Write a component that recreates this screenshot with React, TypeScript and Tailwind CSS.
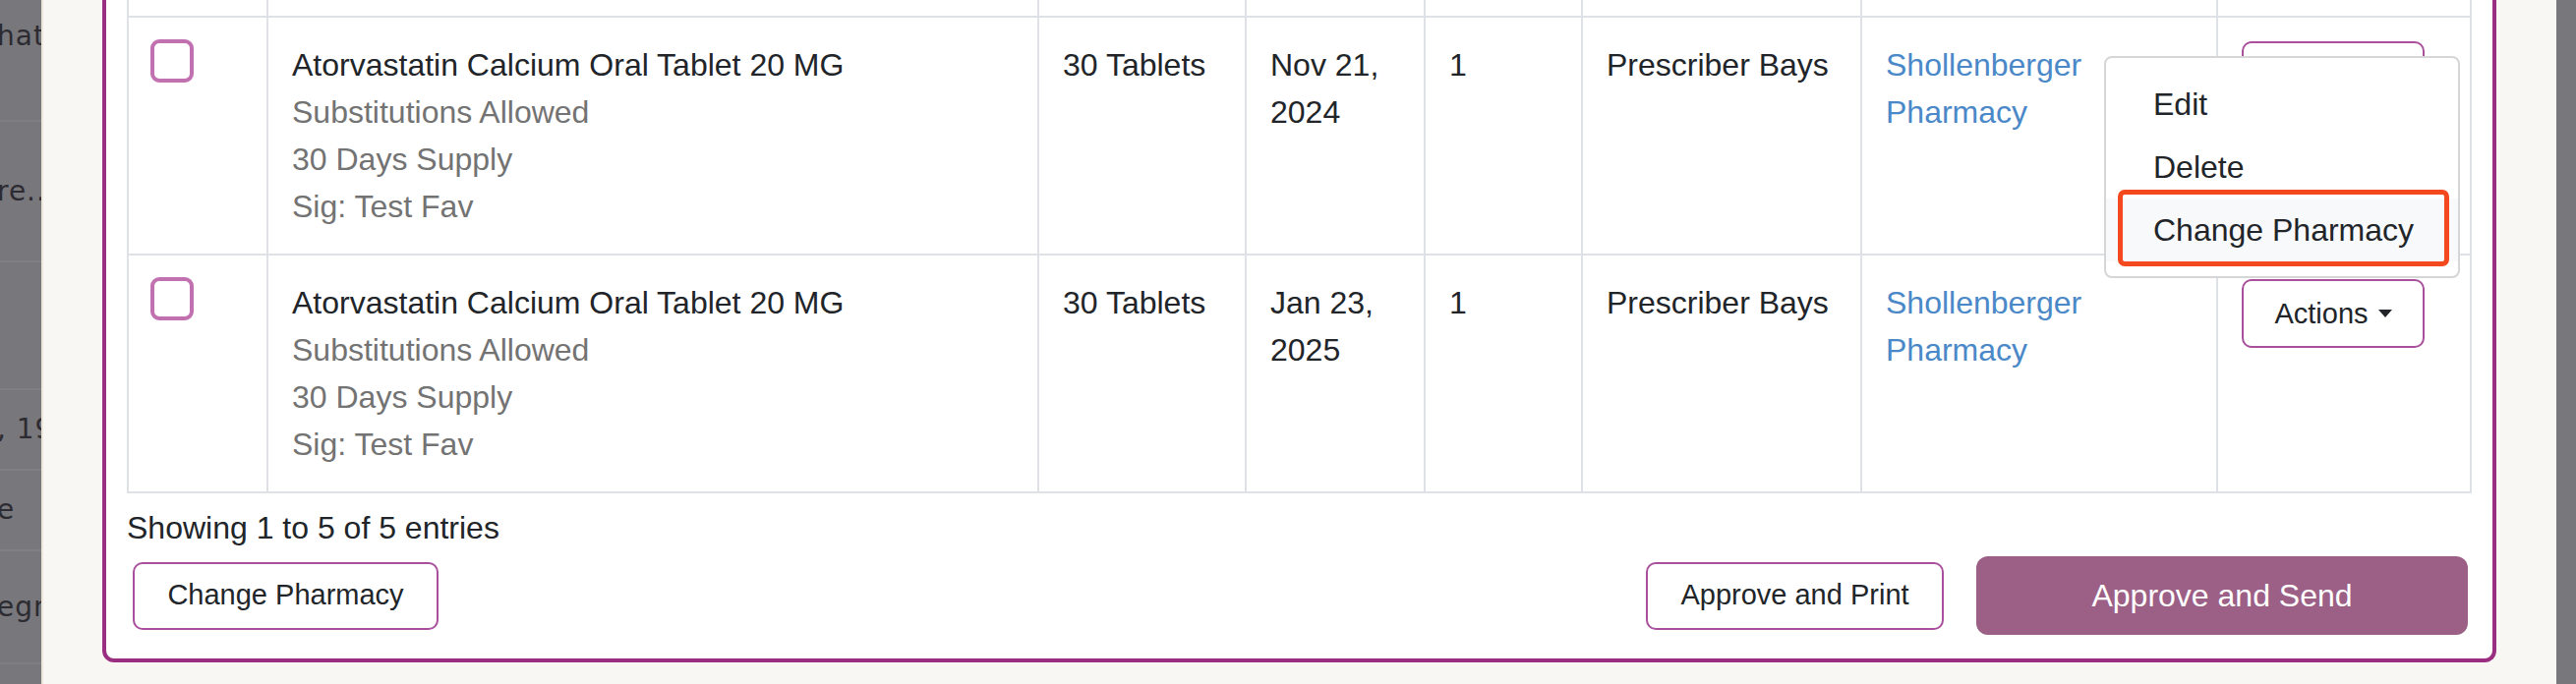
import React from "react";

const COLS = "grid grid-cols-[142px_784px_211px_182px_160px_284px_362px_258px]";

function Caret() {
  return (
    <span className="ml-[10px] inline-block h-0 w-0 border-x-[7px] border-t-[8px] border-x-transparent border-t-[#212529]" />
  );
}

function ActionsButton() {
  return (
    <button className="flex h-[70px] w-[186px] items-center justify-center rounded-[10px] border-2 border-[#a8509b] bg-white text-[29px] text-[#212529]">
      Actions
      <Caret />
    </button>
  );
}

function Cell({ children, className = "" }: { children?: React.ReactNode; className?: string }) {
  return <div className={`border-b-2 border-l-2 border-[#dee2e6] p-[24px] ${className}`}>{children}</div>;
}

function Row({ date }: { date: [string, string] }) {
  return (
    <div className={`${COLS} border-r-2 border-[#dee2e6] text-[32px] leading-[48px] text-[#212529]`}>
      <div className="border-b-2 border-l-2 border-[#dee2e6] pl-[22px] pt-[22px]">
        <div className="h-[44px] w-[44px] rounded-[9px] border-[4px] border-[#c170b0] bg-white" />
      </div>
      <Cell>
        <div>Atorvastatin Calcium Oral Tablet 20 MG</div>
        <div className="text-[#737373]">Substitutions Allowed</div>
        <div className="text-[#737373]">30 Days Supply</div>
        <div className="text-[#737373]">Sig: Test Fav</div>
      </Cell>
      <Cell>
        <div className="whitespace-nowrap">30 Tablets</div>
      </Cell>
      <Cell>
        <div>{date[0]}</div>
        <div>{date[1]}</div>
      </Cell>
      <Cell>1</Cell>
      <Cell>
        <div className="whitespace-nowrap">Prescriber Bays</div>
      </Cell>
      <Cell>
        <div className="text-[#4a88c8]">Shollenberger</div>
        <div className="text-[#4a88c8]">Pharmacy</div>
      </Cell>
      <Cell>
        <ActionsButton />
      </Cell>
    </div>
  );
}

function SideRow({ h, text, line = true }: { h: number; text?: string; line?: boolean }) {
  return (
    <div
      style={{ height: h }}
      className={`flex items-center overflow-hidden whitespace-nowrap text-[28px] text-[#2c2b31] ${line ? "border-b-2 border-[#807f84]" : ""}`}
    >
      {text && <span className="-ml-[3px] tracking-[1px]">{text}</span>}
    </div>
  );
}

export default function App() {
  return (
    <div
      className="flex h-[696px] w-[2620px] overflow-hidden bg-[#f8f7f3]"
      style={{ fontFamily: '"Liberation Sans", Arial, Helvetica, sans-serif' }}
    >
      {/* dimmed background page strip */}
      <div className="flex w-[42px] shrink-0 flex-col overflow-hidden bg-[#78777c]" style={{ fontFamily: '"DejaVu Sans", sans-serif' }}>
        <div className="flex h-[74px] items-center overflow-hidden whitespace-nowrap text-[28px] text-[#2c2b31]">
          <span className="-ml-[3px] tracking-[1px]">hattan</span>
        </div>
        <div className="h-[50px] border-b-2 border-[#807f84]" />
        <SideRow h={143} text="re..." />
        <SideRow h={130} />
        <SideRow h={82} text=", 1925" />
        <SideRow h={82} text="e" />
        <SideRow h={115} text="egnant" />
        <div className="flex-1" />
      </div>

      {/* drawer panel */}
      <div className="flex w-[2558px] shrink-0 border-l-2 border-[#ece7dc] pl-[60px]">
        <div className="h-[674px] w-[2435px] rounded-b-[12px] border-x-4 border-b-4 border-[#9a2e80] bg-white px-[21px] pb-[24px]">
          <div className="relative w-[2385px]">
            {/* partial row above */}
            <div className={`${COLS} h-[18px] border-r-2 border-[#dee2e6]`}>
              {Array.from({ length: 8 }).map((_, i) => (
                <div key={i} className="border-b-2 border-l-2 border-[#dee2e6]" />
              ))}
            </div>
            <Row date={["Nov 21,", "2024"]} />
            <Row date={["Jan 23,", "2025"]} />

            {/* dropdown menu */}
            <div className="absolute left-[2011px] top-[57px] w-[362px] rounded-[8px] border-2 border-[#d6d6d6] bg-white py-[15px] text-[32px] leading-[48px] text-[#212529]">
              <div className="px-[48px] py-[8px]">Edit</div>
              <div className="px-[48px] py-[8px]">Delete</div>
              <div className="relative whitespace-nowrap bg-[#f8f9fa] px-[48px] py-[8px]">
                Change Pharmacy
                <div className="absolute -bottom-[5px] left-[12px] right-[9px] -top-[9px] rounded-[7px] border-[5px] border-[#f4491f]" />
              </div>
            </div>
          </div>

          {/* footer */}
          <div className="mt-[11px] text-[32px] leading-[48px] text-[#212529]">Showing 1 to 5 of 5 entries</div>
          <div className="mt-[5px] flex h-[80px] items-center">
            <button className="ml-[6px] flex h-[69px] w-[311px] items-center justify-center rounded-[10px] border-2 border-[#a8509b] bg-white text-[29px] text-[#212529]">
              Change Pharmacy
            </button>
            <div className="flex-1" />
            <button className="flex h-[69px] w-[303px] items-center justify-center rounded-[10px] border-2 border-[#a8509b] bg-white text-[29px] text-[#212529]">
              Approve and Print
            </button>
            <button className="ml-[33px] mr-[4px] flex h-[80px] w-[500px] items-center justify-center rounded-[12px] bg-[#9c5f86] text-[32px] text-white">
              Approve and Send
            </button>
          </div>
        </div>
      </div>

      {/* right dimmed strip */}
      <div className="w-[20px] shrink-0 bg-[#78777c]" />
    </div>
  );
}
